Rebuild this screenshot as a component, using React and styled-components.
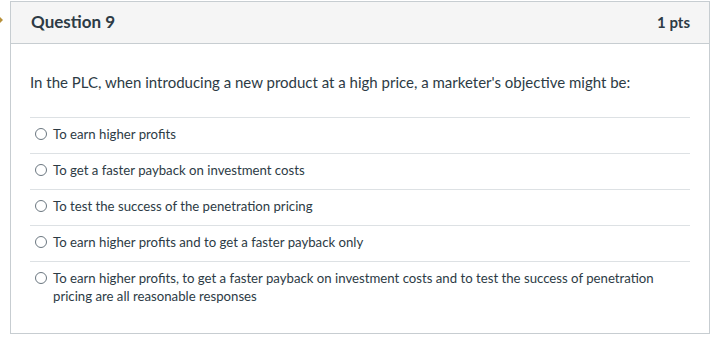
import styled, { createGlobalStyle } from "styled-components";

const GlobalStyle = createGlobalStyle`
  body {
    margin: 0;
    background: #fff;
    font-family: Lato, "Open Sans", sans-serif;
    color: #2d3b45;
  }
`;

const Page = styled.div`
  position: relative;
  padding: 1px 12px 0 10px;
`;

const Marker = styled.div`
  position: absolute;
  left: 0;
  top: 17px;
  width: 0;
  height: 0;
  border-top: 3px solid transparent;
  border-bottom: 3px solid transparent;
  border-left: 3px solid #b8913a;
`;

const Card = styled.div`
  width: 698px;
  border: 1px solid #c7cdd1;
  background: #fff;
`;

const Header = styled.div`
  display: flex;
  align-items: center;
  justify-content: space-between;
  box-sizing: border-box;
  height: 42px;
  padding: 0 19px 2px 20px;
  background: #f5f5f5;
  border-bottom: 1px solid #c7cdd1;
`;

const Title = styled.h2`
  margin: 0;
  font-size: 17px;
  font-weight: 700;
  color: #2d3b45;
`;

const Points = styled.span`
  font-size: 15px;
  font-weight: 700;
  color: #2d3b45;
`;

const Body = styled.div`
  padding: 27px 19px 18px 19px;
`;

const QuestionText = styled.p`
  margin: 0 0 24px;
  font-size: 15px;
  line-height: 22px;
`;

const Options = styled.div`
  display: flex;
  flex-direction: column;
`;

const Option = styled.label`
  display: flex;
  align-items: flex-start;
  gap: 6px;
  padding: 7px 0 10px 5px;
  border-top: 1px solid #dde1e4;
  font-size: 13.2px;
  line-height: 18px;
`;

const Radio = styled.span`
  flex: none;
  width: 10px;
  height: 10px;
  margin-top: 3px;
  border: 1px solid #6b7780;
  border-radius: 50%;
  background: #fff;
`;

const answers = [
  "To earn higher profits",
  "To get a faster payback on investment costs",
  "To test the success of the penetration pricing",
  "To earn higher profits and to get a faster payback only",
  "To earn higher profits, to get a faster payback on investment costs and to test the success of penetration pricing are all reasonable responses",
];

export default function App() {
  return (
    <>
      <GlobalStyle />
      <Page>
        <Marker />
        <Card>
          <Header>
            <Title>Question 9</Title>
            <Points>1 pts</Points>
          </Header>
          <Body>
            <QuestionText>
              In the PLC, when introducing a new product at a high price, a marketer's objective might be:
            </QuestionText>
            <Options>
              {answers.map((a) => (
                <Option key={a}>
                  <Radio />
                  <span>{a}</span>
                </Option>
              ))}
            </Options>
          </Body>
        </Card>
      </Page>
    </>
  );
}
